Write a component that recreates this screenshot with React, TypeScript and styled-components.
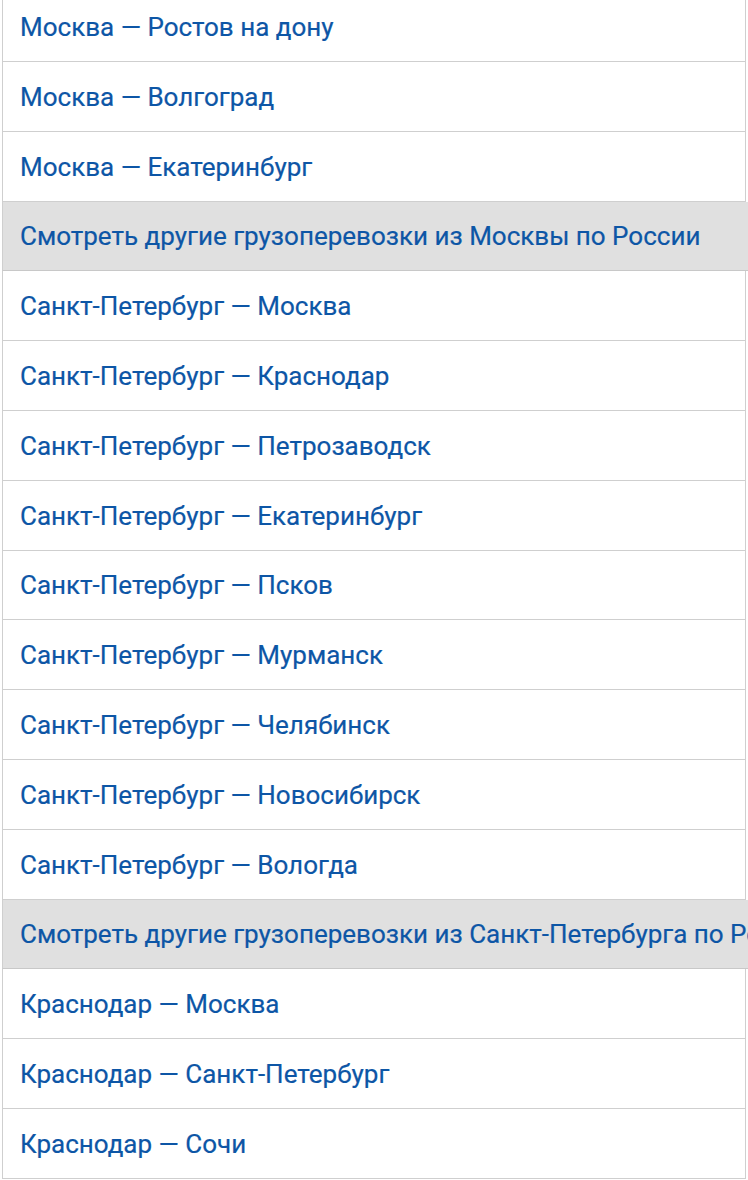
import React from "react";
import styled, { createGlobalStyle } from "styled-components";

const GlobalStyle = createGlobalStyle`
  html, body {
    margin: 0;
    padding: 0;
    background: #fff;
    overflow: hidden;
  }
  body {
    font-family: Roboto, "Liberation Sans", Arial, sans-serif;
  }
`;

const RouteList = styled.ul`
  list-style: none;
  margin: -7.8px 0 0 2px;
  padding: 0;
  width: 744px;
`;

const RouteItem = styled.li<{ $more?: boolean }>`
  box-sizing: border-box;
  height: 69.8px;
  display: flex;
  align-items: center;
  padding: 1px 0 0 17px;
  border: 1px solid #cfcfcf;
  border-top: none;
  white-space: nowrap;
  overflow: hidden;
  background: ${(p) => (p.$more ? "#e0e0e0" : "#fff")};
  border-right: ${(p) => (p.$more ? "none" : "1px solid #cfcfcf")};
  width: ${(p) => (p.$more ? "746px" : "auto")};
  border-bottom-color: ${(p) => (p.$more ? "#c8c8c8" : "#cfcfcf")};
  a {
    color: #0d56a6;
    font-size: 26px;
    text-decoration: none;
    line-height: 1;
    -webkit-text-stroke: 0.2px #0d56a6;
  }
`;

type Route = { text: string; more?: boolean };

const routes: Route[] = [
  { text: "Москва — Ростов на дону" },
  { text: "Москва — Волгоград" },
  { text: "Москва — Екатеринбург" },
  { text: "Смотреть другие грузоперевозки из Москвы по России", more: true },
  { text: "Санкт-Петербург — Москва" },
  { text: "Санкт-Петербург — Краснодар" },
  { text: "Санкт-Петербург — Петрозаводск" },
  { text: "Санкт-Петербург — Екатеринбург" },
  { text: "Санкт-Петербург — Псков" },
  { text: "Санкт-Петербург — Мурманск" },
  { text: "Санкт-Петербург — Челябинск" },
  { text: "Санкт-Петербург — Новосибирск" },
  { text: "Санкт-Петербург — Вологда" },
  { text: "Смотреть другие грузоперевозки из Санкт-Петербурга по России", more: true },
  { text: "Краснодар — Москва" },
  { text: "Краснодар — Санкт-Петербург" },
  { text: "Краснодар — Сочи" },
];

export default function App() {
  return (
    <>
      <GlobalStyle />
      <RouteList>
        {routes.map((r) => (
          <RouteItem key={r.text} $more={r.more}>
            <a href="#">{r.text}</a>
          </RouteItem>
        ))}
      </RouteList>
    </>
  );
}
